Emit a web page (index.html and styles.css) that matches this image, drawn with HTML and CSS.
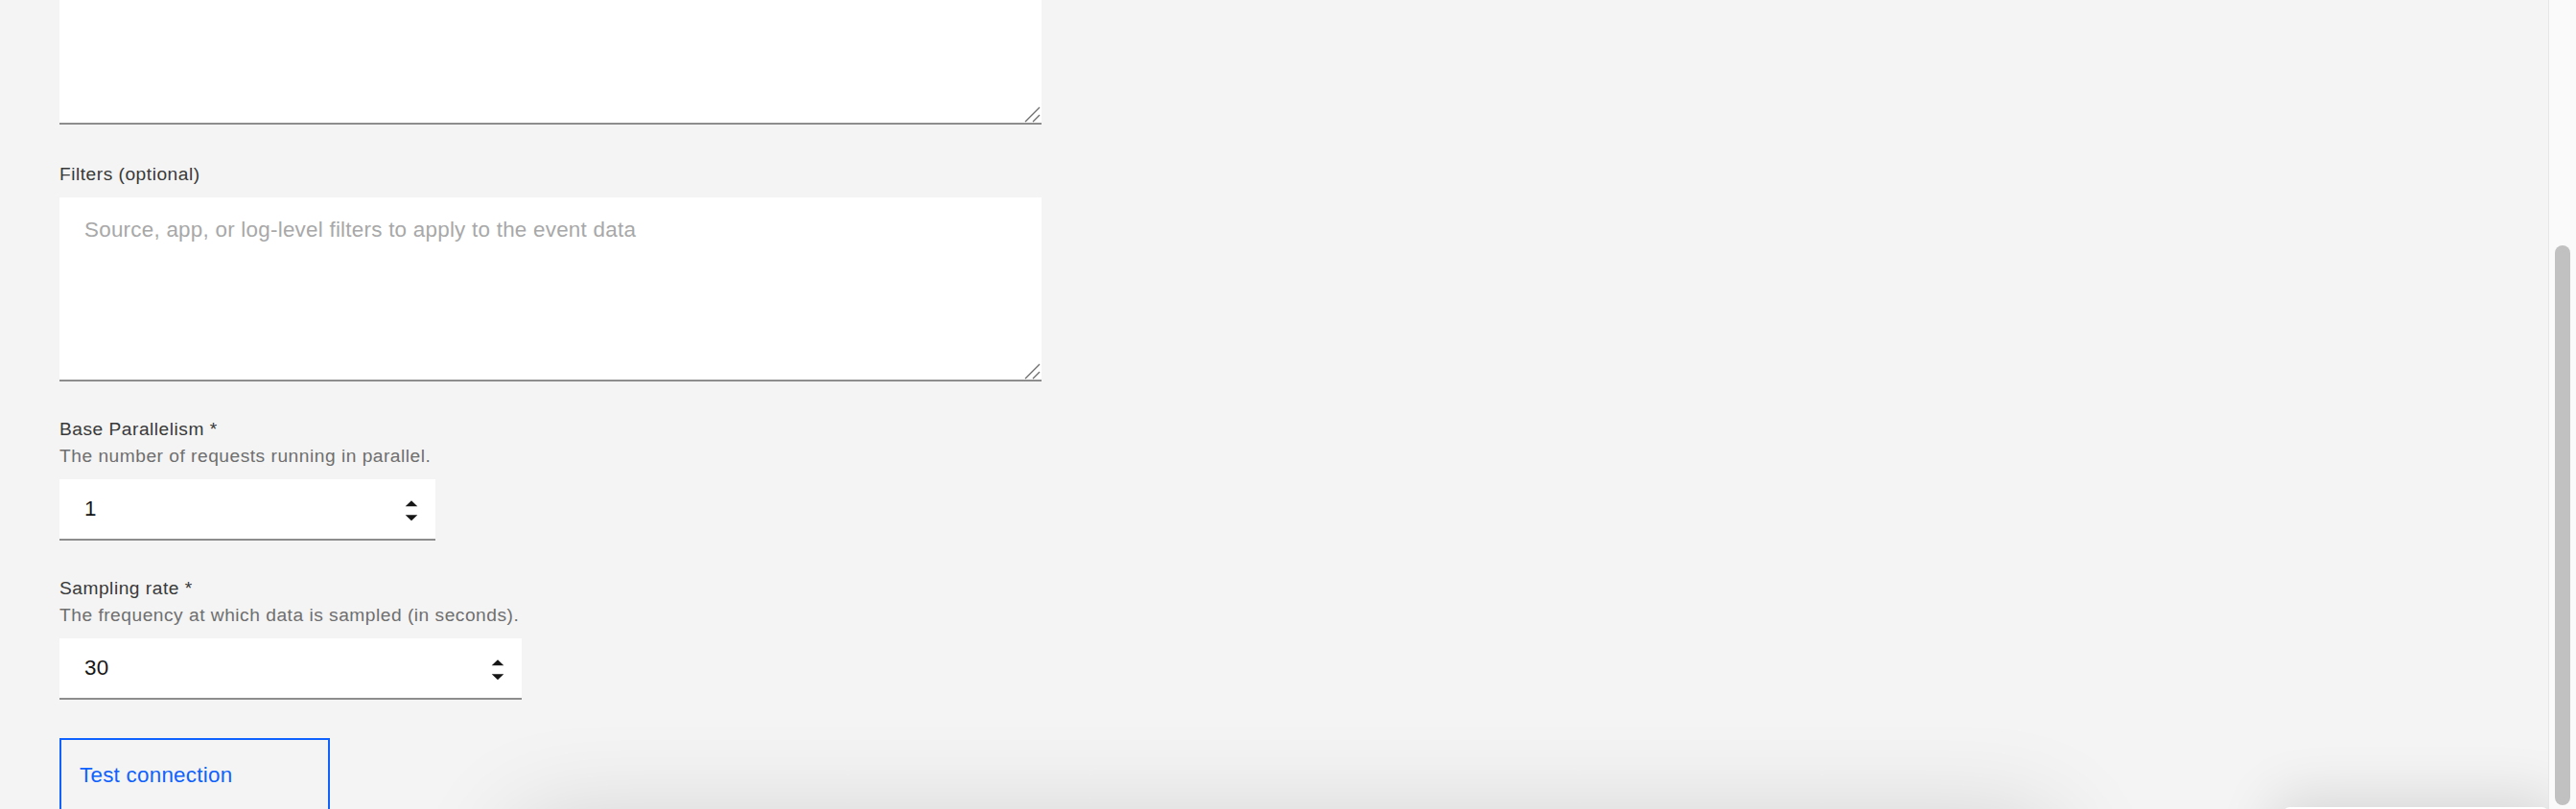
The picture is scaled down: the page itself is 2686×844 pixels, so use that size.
FILE: index.html
```html
<!DOCTYPE html>
<html lang="en">
<head>
<meta charset="utf-8">
<title>Data source settings</title>
<link rel="stylesheet" href="styles.css">
</head>
<body>
<div class="page">
  <main class="content">
    <form class="form">
      <div class="field field-top">
        <div class="textarea-wrap">
          <textarea class="textarea" aria-label="Query"></textarea>
          <svg class="resizer" width="17" height="17" viewBox="0 0 17 17" aria-hidden="true"><path d="M16 1 L1 16 M16 9 L9 16" stroke="#6f6f6f" stroke-width="1.4" fill="none"/></svg>
        </div>
      </div>

      <div class="field field-filters">
        <label class="label label-gap" for="filters">Filters (optional)</label>
        <div class="textarea-wrap">
          <textarea id="filters" class="textarea" placeholder="Source, app, or log-level filters to apply to the event data"></textarea>
          <svg class="resizer" width="17" height="17" viewBox="0 0 17 17" aria-hidden="true"><path d="M16 1 L1 16 M16 9 L9 16" stroke="#6f6f6f" stroke-width="1.4" fill="none"/></svg>
        </div>
      </div>

      <div class="field">
        <label class="label" for="parallel">Base Parallelism *</label>
        <div class="helper">The number of requests running in parallel.</div>
        <div class="number number-short">
          <input id="parallel" class="number-input" type="number" value="1">
          <svg class="spin" width="14" height="22" viewBox="0 0 14 22" aria-hidden="true"><path d="M7 0.3 L13.3 6.3 L0.7 6.3 Z M0.7 15.3 L13.3 15.3 L7 21.3 Z" fill="#161616"/></svg>
        </div>
      </div>

      <div class="field">
        <label class="label" for="sampling">Sampling rate *</label>
        <div class="helper">The frequency at which data is sampled (in seconds).</div>
        <div class="number number-long">
          <input id="sampling" class="number-input" type="number" value="30">
          <svg class="spin" width="14" height="22" viewBox="0 0 14 22" aria-hidden="true"><path d="M7 0.3 L13.3 6.3 L0.7 6.3 Z M0.7 15.3 L13.3 15.3 L7 21.3 Z" fill="#161616"/></svg>
        </div>
      </div>

      <button type="button" class="btn-tertiary">Test connection</button>
    </form>
  </main>
  <div class="scrollbar"><div class="thumb"></div></div>
</div>
<div class="float float-a"></div>
<div class="float float-b"></div>
</body>
</html>
```

FILE: styles.css
```css
html, body {
  margin: 0;
  padding: 0;
  height: 100%;
}

body {
  background: #f4f4f4;
  overflow: hidden;
  font-family: "Liberation Sans", Arial, sans-serif;
  color: #161616;
}

.page {
  display: flex;
  height: 844px;
}

.content {
  flex: 1;
  overflow: hidden;
}

.form {
  display: flex;
  flex-direction: column;
  align-items: flex-start;
  margin-top: -62px;
  padding-left: 62px;
}

.field {
  display: flex;
  flex-direction: column;
  align-items: flex-start;
  margin-top: 37px;
}

.field-top {
  margin-top: 0;
}

.field-filters {
  margin-top: 39px;
}

.label {
  font-size: 19.2px;
  line-height: 25px;
  letter-spacing: 0.5px;
  color: #393939;
  margin-bottom: 3px;
}

.label-gap {
  margin-bottom: 12px;
}

.helper {
  font-size: 19.2px;
  line-height: 25px;
  letter-spacing: 0.5px;
  color: #6f6f6f;
  margin-bottom: 12px;
}

.textarea-wrap {
  position: relative;
  width: 1024px;
}

.textarea {
  display: block;
  box-sizing: border-box;
  width: 1024px;
  height: 192px;
  margin: 0;
  padding: 18px 26px;
  border: 0;
  border-bottom: 2px solid #8d8d8d;
  background: #ffffff;
  font-family: "Liberation Sans", Arial, sans-serif;
  font-size: 22.4px;
  line-height: 32px;
  letter-spacing: 0.25px;
  color: #161616;
  resize: none;
  overflow: hidden;
  outline: none;
}

.textarea::placeholder {
  color: #a8a8a8;
  opacity: 1;
}

.resizer {
  position: absolute;
  right: 1px;
  bottom: 2px;
}

.number {
  position: relative;
}

.number-short {
  width: 392px;
}

.number-long {
  width: 482px;
}

.number-input {
  display: block;
  box-sizing: border-box;
  width: 100%;
  height: 64px;
  margin: 0;
  padding: 0 26px;
  border: 0;
  border-bottom: 2px solid #8d8d8d;
  background: #ffffff;
  font-family: "Liberation Sans", Arial, sans-serif;
  font-size: 22.4px;
  letter-spacing: 0.25px;
  color: #161616;
  outline: none;
  -moz-appearance: textfield;
}

.number-input::-webkit-inner-spin-button,
.number-input::-webkit-outer-spin-button {
  -webkit-appearance: none;
  margin: 0;
}

.spin {
  position: absolute;
  right: 18px;
  top: 22px;
}

.btn-tertiary {
  display: flex;
  align-items: center;
  box-sizing: border-box;
  width: 282px;
  height: 77px;
  margin-top: 40px;
  padding: 0 19px;
  border: 2px solid #0f62fe;
  background: transparent;
  color: #0f62fe;
  font-family: "Liberation Sans", Arial, sans-serif;
  font-size: 22.4px;
  letter-spacing: 0.25px;
  text-align: left;
  cursor: pointer;
}

.scrollbar {
  position: relative;
  z-index: 2;
  box-sizing: border-box;
  width: 29px;
  flex: none;
  padding-top: 256px;
  background: #fafafa;
  border-left: 1px solid #e6e6e6;
  display: flex;
  justify-content: center;
}

.thumb {
  width: 16px;
  height: 584px;
  border-radius: 8px;
  background: #c1c1c1;
}

.float {
  position: fixed;
  background: #ffffff;
  z-index: 1;
}

.float-a {
  left: 560px;
  width: 1560px;
  top: 880px;
  height: 120px;
  box-shadow: 0 0 110px 20px rgba(0, 0, 0, 0.16);
}

.float-b {
  left: 2380px;
  width: 278px;
  top: 842px;
  height: 120px;
  border-radius: 8px 8px 0 0;
  box-shadow: 0 0 60px 10px rgba(0, 0, 0, 0.12);
}
```
